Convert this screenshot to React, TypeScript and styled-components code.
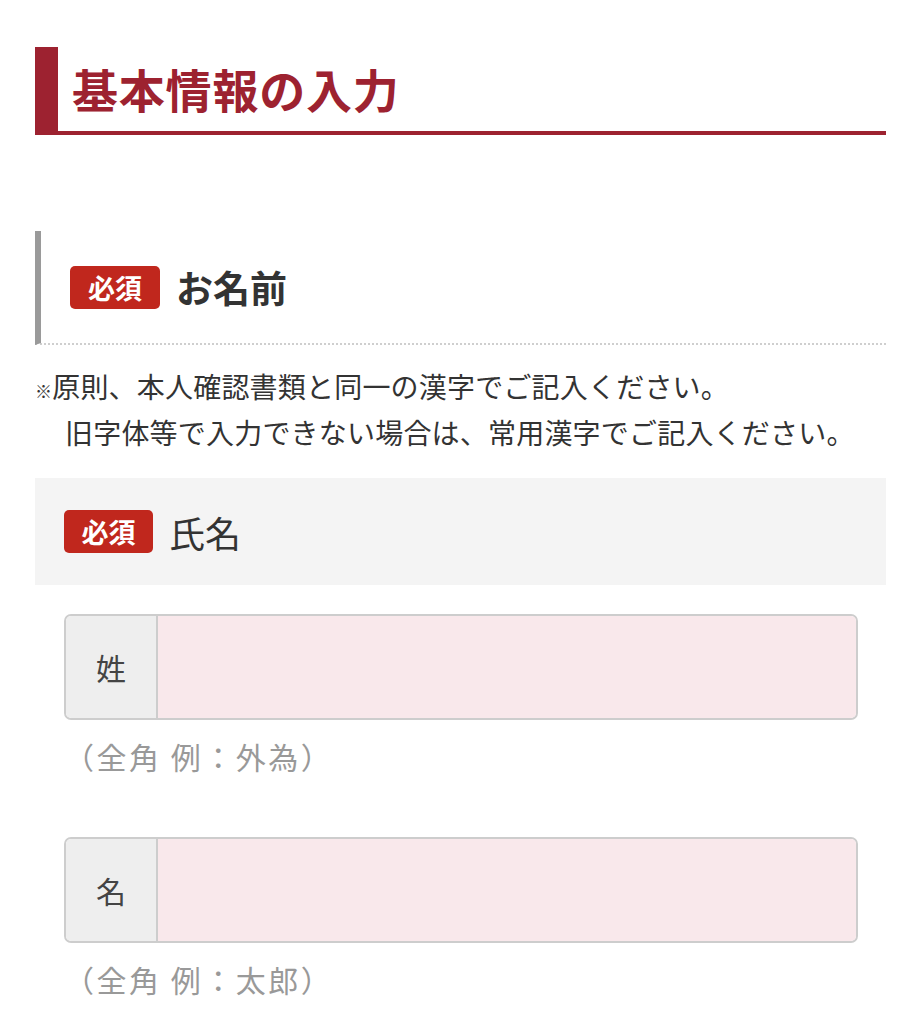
import React from "react";
import styled, { createGlobalStyle } from "styled-components";

const Global = createGlobalStyle`
  html, body { margin: 0; padding: 0; background: #fff; }
  body { font-family: "Noto Sans CJK JP", "Noto Sans", sans-serif; color: #333; }
`;

const Page = styled.div`
  padding: 47px 36px 0 35px;
`;

const PageTitle = styled.h1`
  margin: 0;
  height: 88px;
  box-sizing: border-box;
  padding: 0 0 3px 14px;
  display: flex;
  align-items: center;
  border-left: 23px solid #9d2230;
  border-bottom: 4px solid #9d2230;
  font-size: 46px;
  font-weight: 700;
  color: #9d2230;
  letter-spacing: 0.8px;
`;

const SectionHead = styled.div`
  margin-top: 96px;
  height: 112px;
  display: flex;
  align-items: center;
  gap: 16px;
  border-left: 6px solid #9a9a9a;
  border-bottom: 2px dotted #cfcfcf;
  padding-left: 29px;
`;

const Badge = styled.span<{ $w: number; $h: number }>`
  display: inline-flex;
  align-items: center;
  justify-content: center;
  width: ${(p) => p.$w}px;
  height: ${(p) => p.$h}px;
  border-radius: 5px;
  background: #c0271d;
  color: #fff;
  font-size: 27px;
  font-weight: 700;
  line-height: 1;
`;

const SectionTitle = styled.span`
  font-size: 37px;
  font-weight: 700;
  color: #333;
`;

const Note = styled.div`
  margin-top: 18px;
  font-size: 28px;
  line-height: 46px;
  letter-spacing: 0.2px;
  color: #333;
`;

const NoteLine = styled.div<{ $indent?: boolean }>`
  height: 46px;
  padding-left: ${(p) => (p.$indent ? 30 : 0)}px;
  white-space: nowrap;
`;

const Mark = styled.span`
  font-size: 17px;
  line-height: 1;
`;

const FieldHead = styled.div`
  margin-top: 23px;
  height: 107px;
  background: #f4f4f4;
  display: flex;
  align-items: center;
  gap: 16px;
  padding-left: 29px;
`;

const FieldLabel = styled.span`
  font-size: 36px;
  font-weight: 400;
  color: #333;
`;

const Fields = styled.div`
  padding: 29px 28px 0 29px;
  display: flex;
  flex-direction: column;
  gap: 59px;
`;

const FieldBlock = styled.div`
  display: flex;
  flex-direction: column;
  gap: 14px;
`;

const InputGroup = styled.div`
  display: flex;
  height: 106px;
  box-sizing: border-box;
  border: 2px solid #cdcdcd;
  border-radius: 7px;
  overflow: hidden;
`;

const InputLabel = styled.div`
  width: 90px;
  flex: none;
  display: flex;
  align-items: center;
  justify-content: center;
  background: #eeeeee;
  border-right: 2px solid #cdcdcd;
  font-size: 30px;
  color: #444;
`;

const Input = styled.input`
  flex: 1;
  border: none;
  outline: none;
  background: #f9e8eb;
  font-size: 28px;
  padding: 0 16px;
  font-family: inherit;
`;

const Hint = styled.div`
  font-size: 30px;
  line-height: 44px;
  letter-spacing: 2.5px;
  color: #999;
`;

export default function App() {
  return (
    <>
      <Global />
      <Page>
        <PageTitle>基本情報の入力</PageTitle>
        <SectionHead>
          <Badge $w={90} $h={43}>必須</Badge>
          <SectionTitle>お名前</SectionTitle>
        </SectionHead>
        <Note>
          <NoteLine>
            <Mark>※</Mark>原則、本人確認書類と同一の漢字でご記入ください。
          </NoteLine>
          <NoteLine $indent>旧字体等で入力できない場合は、常用漢字でご記入ください。</NoteLine>
        </Note>
        <FieldHead>
          <Badge $w={89} $h={43}>必須</Badge>
          <FieldLabel>氏名</FieldLabel>
        </FieldHead>
        <Fields>
          <FieldBlock>
            <InputGroup>
              <InputLabel>姓</InputLabel>
              <Input aria-label="姓" />
            </InputGroup>
            <Hint>（全角 例：外為）</Hint>
          </FieldBlock>
          <FieldBlock>
            <InputGroup>
              <InputLabel>名</InputLabel>
              <Input aria-label="名" />
            </InputGroup>
            <Hint>（全角 例：太郎）</Hint>
          </FieldBlock>
        </Fields>
      </Page>
    </>
  );
}
